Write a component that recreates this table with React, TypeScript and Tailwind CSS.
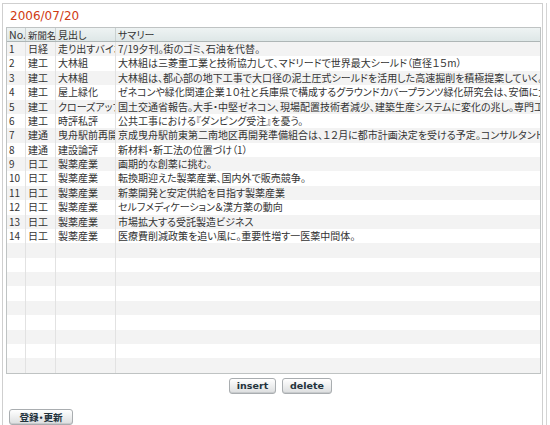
const ROWS: [string, string, string, string][] = [
  ["1", "日経", "走り出すバイオ", "7/19夕刊。街のゴミ、石油を代替。"],
  ["2", "建工", "大林組", "大林組は三菱重工業と技術協力して、マドリードで世界最大シールド（直径１５m）"],
  ["3", "建工", "大林組", "大林組は、都心部の地下工事で大口径の泥土圧式シールドを活用した高速掘削を積極提案していく。"],
  ["4", "建工", "屋上緑化", "ゼネコンや緑化関連企業１０社と兵庫県で構成するグラウンドカバープランツ緑化研究会は、安価に大規模な屋上緑化を実現する。"],
  ["5", "建工", "クローズアップ", "国土交通省報告。大手・中堅ゼネコン、現場配置技術者減少、建築生産システムに変化の兆し。専門工事業者の役割が拡大。"],
  ["6", "建工", "時評私評", "公共工事における『ダンピング受注』を憂う。"],
  ["7", "建通", "曳舟駅前再開発", "京成曳舟駅前東第二南地区再開発準備組合は、１２月に都市計画決定を受ける予定。コンサルタント：佐藤総合計画。"],
  ["8", "建通", "建設論評", "新材料・新工法の位置づけ（1）"],
  ["9", "日工", "製薬産業", "画期的な創薬に挑む。"],
  ["10", "日工", "製薬産業", "転換期迎えた製薬産業、国内外で販売競争。"],
  ["11", "日工", "製薬産業", "新薬開発と安定供給を目指す製薬産業"],
  ["12", "日工", "製薬産業", "セルフメディケーション＆漢方薬の動向"],
  ["13", "日工", "製薬産業", "市場拡大する受託製造ビジネス"],
  ["14", "日工", "製薬産業", "医療費削減政策を追い風に。重要性増す一医薬中間体。"],
];

const TOTAL_ROWS = 23;

const jp = "font-['MS_UI_Gothic','Noto_Sans_CJK_JP',sans-serif] [font-feature-settings:'palt']";
const cell = "overflow-hidden whitespace-nowrap pl-[2px] leading-[14px]";

function Button({ children, className = "" }: { children: React.ReactNode; className?: string }) {
  return (
    <button
      type="button"
      className={`h-[16px] rounded-[3px] border border-[#a9adb0] bg-gradient-to-b from-[#ffffff] to-[#dcdedf] text-[#23323c] font-bold leading-none shadow-[inset_0_-1px_0_#c8cbcd] ${className}`}
    >
      {children}
    </button>
  );
}

export default function App() {
  const rows = Array.from({ length: TOTAL_ROWS }, (_, i) => ROWS[i] ?? ["", "", "", ""]);

  return (
    <div className="w-[550px] h-[425px] bg-white pl-[2px] pt-[3px]">
      <div className="w-[545px] border-r border-[#d4d4d4]">
        <div className="w-[541px] border border-[#cfcfcf] bg-white flex flex-col pl-[3px] pr-px pb-[3px]">
          <div className="h-[23px] flex items-center pl-[4px] text-[12px] text-[#cf3a12] font-['DejaVu_Sans',sans-serif]">
            2006/07/20
          </div>

          <div className={`border border-[#bfc3c3] text-[10px] text-[#333] ${jp}`}>
            <div className="grid grid-cols-[19px_30px_60px_1fr] h-[14px] border-b border-[#aeb6b6] bg-gradient-to-b from-[#eef3f3] to-[#dee7e7]">
              <div className={`${cell} border-r border-[#c9d1d1] leading-[13px] text-[10.6px]`}>No.</div>
              <div className={`${cell} border-r border-[#c9d1d1] leading-[13px] text-[9.4px]`}>新聞名</div>
              <div className={`${cell} border-r border-[#c9d1d1] leading-[13px]`}>見出し</div>
              <div className={`${cell} leading-[13px]`}>サマリー</div>
            </div>
            {rows.map((r, i) => (
              <div
                key={i}
                className={`grid grid-cols-[19px_30px_60px_1fr] h-[14.39px] ${i % 2 === 0 ? "bg-[#f3f3f3]" : "bg-white"}`}
              >
                <div className={`${cell} border-r border-[#e2e2e2]`}>{r[0]}</div>
                <div className={`${cell} border-r border-[#e2e2e2]`}>{r[1]}</div>
                <div className={`${cell} border-r border-[#e2e2e2]`}>{r[2]}</div>
                <div className={cell}>{r[3]}</div>
              </div>
            ))}
          </div>

          <div className="flex justify-center gap-[6px] pl-[14px] mt-[4px]">
            <Button className="w-[47px] text-[9.5px] font-['DejaVu_Sans',sans-serif]">insert</Button>
            <Button className="w-[50px] text-[9.5px] font-['DejaVu_Sans',sans-serif]">delete</Button>
          </div>

          <div className="mt-[9px] pl-[3px]">
            <Button className={`w-[64px] text-[9.6px] ${jp}`}>登録・更新</Button>
          </div>
        </div>
      </div>
    </div>
  );
}
